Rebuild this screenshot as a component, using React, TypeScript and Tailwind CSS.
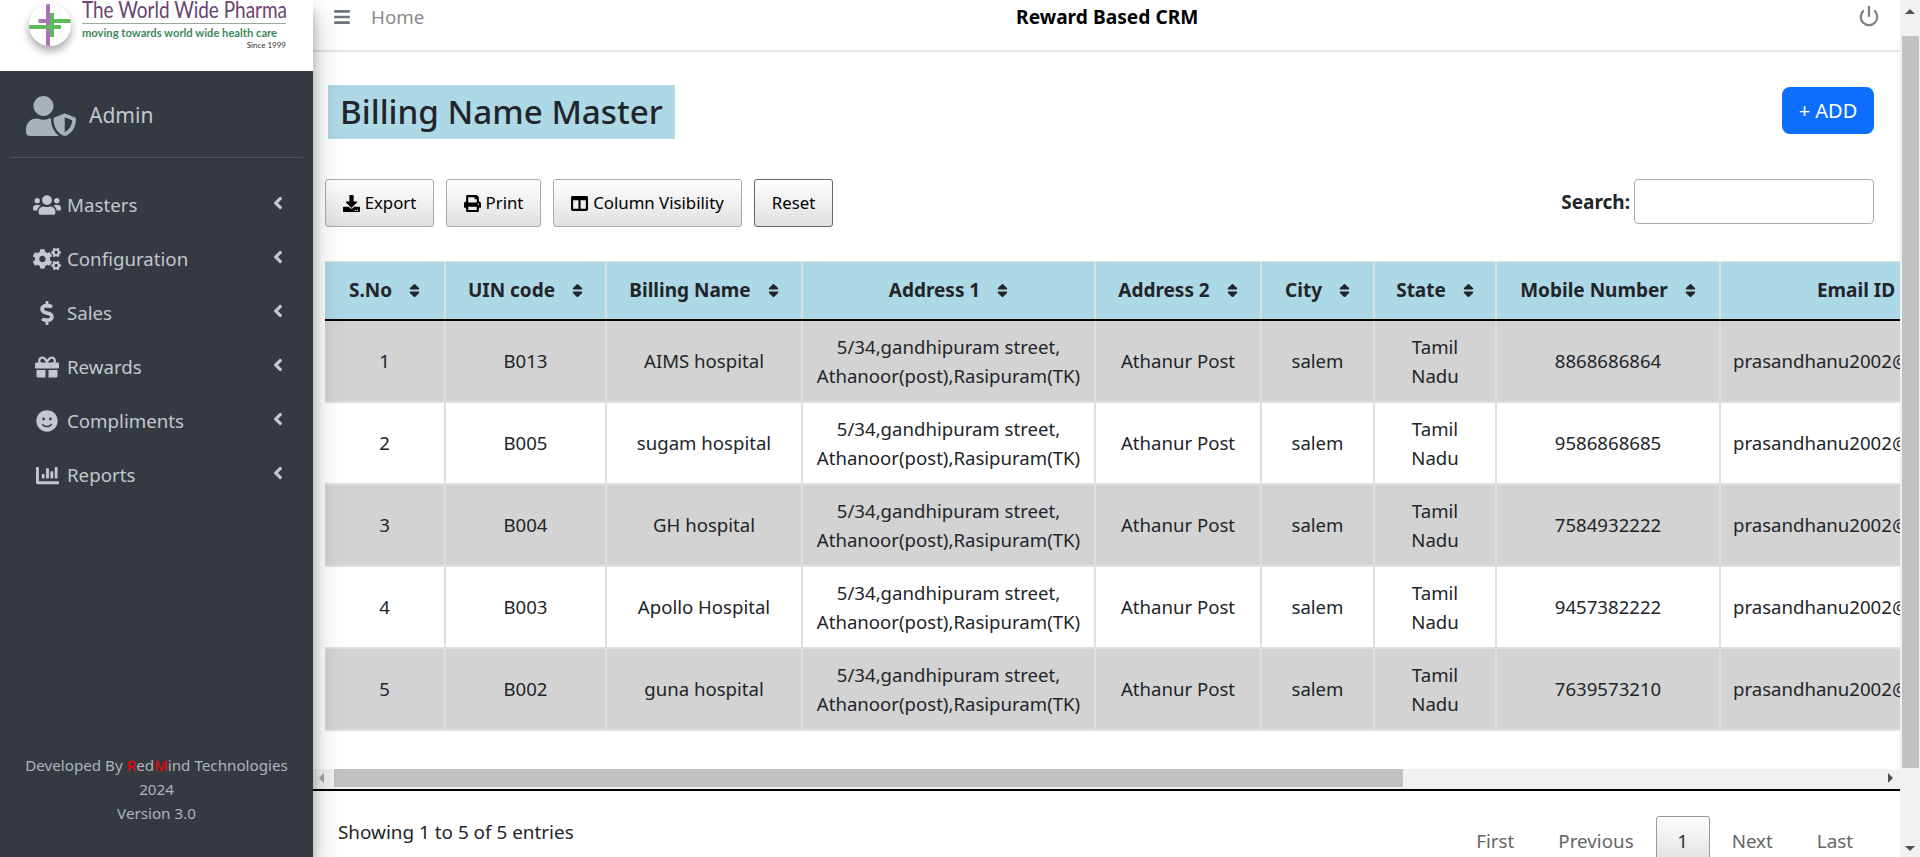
import React from 'react';
import { Power } from 'lucide-react';
import {
  FaAngleLeft,
  FaBars,
  FaChartBar,
  FaColumns,
  FaCogs,
  FaDollarSign,
  FaDownload,
  FaGift,
  FaPrint,
  FaSmile,
  FaSort,
  FaUsers,
  FaUserShield,
} from 'react-icons/fa';

const menu = [
  { label: 'Masters', icon: FaUsers, size: 'w-7 h-7' },
  { label: 'Configuration', icon: FaCogs, size: 'w-7 h-7' },
  { label: 'Sales', icon: FaDollarSign, size: 'w-6 h-6' },
  { label: 'Rewards', icon: FaGift, size: 'w-6 h-6' },
  { label: 'Compliments', icon: FaSmile, size: 'w-[22px] h-[22px]' },
  { label: 'Reports', icon: FaChartBar, size: 'w-[23px] h-[23px]' },
];

const columns = [
  { label: 'S.No', width: 'w-[120px]' },
  { label: 'UIN code', width: 'w-[161px]' },
  { label: 'Billing Name', width: 'w-[196px]' },
  { label: 'Address 1', width: 'w-[293px]' },
  { label: 'Address 2', width: 'w-[166px]' },
  { label: 'City', width: 'w-[113px]' },
  { label: 'State', width: 'w-[122px]' },
  { label: 'Mobile Number', width: 'w-[224px]' },
  { label: 'Email ID', width: 'w-[300px]' },
];

const rows = [
  { no: 1, uin: 'B013', name: 'AIMS hospital', mobile: '8868686864' },
  { no: 2, uin: 'B005', name: 'sugam hospital', mobile: '9586868685' },
  { no: 3, uin: 'B004', name: 'GH hospital', mobile: '7584932222' },
  { no: 4, uin: 'B003', name: 'Apollo Hospital', mobile: '9457382222' },
  { no: 5, uin: 'B002', name: 'guna hospital', mobile: '7639573210' },
];

const cell = 'border-r-2 border-[#e0e0e0] px-3 text-center font-normal';

function Logo() {
  return (
    <div className="flex h-[71px] shrink-0 overflow-hidden bg-white pl-[29px] pt-1">
      <svg viewBox="0 0 42 42" className="h-[42px] w-[42px] shrink-0 rounded-full shadow-[0_5px_9px_rgba(0,0,0,0.35)]">
        <circle cx="21" cy="21" r="21" fill="#fff" />
        <rect x="17" y="0" width="4" height="42" fill="#ab73b6" />
        <rect x="9.5" y="15" width="23" height="4" fill="#ab73b6" />
        <rect x="21" y="9" width="4" height="24" fill="#5cbc5c" />
        <rect x="0" y="21" width="32" height="4" fill="#5cbc5c" />
        <rect x="21" y="15" width="21" height="4" fill="#5cbc5c" />
      </svg>
      <div className="ml-[11px] w-[204px] font-['Lato',sans-serif]">
        <div className="-mt-[10px] origin-left scale-x-[0.79] whitespace-nowrap text-[24px] leading-[30px] text-[#6b4272]">The World Wide Pharma</div>
        <div className="mt-[-1px] h-px bg-[#9aa89a]" />
        <div className="mt-[2px] whitespace-nowrap text-[11.2px] font-bold leading-[14px] text-[#3c8a5c]">moving towards world wide health care</div>
        <div className="text-right text-[8px] leading-[10px] text-[#333]">Since 1999</div>
      </div>
    </div>
  );
}

function Sidebar() {
  return (
    <aside className="z-10 flex h-full w-[313px] shrink-0 flex-col bg-[#343a40] shadow-[0_14px_28px_rgba(0,0,0,0.25),0_10px_10px_rgba(0,0,0,0.22)]">
      <Logo />
      <div className="mx-[10px] flex h-[87px] items-center border-b border-[#4b545c] pl-4 pt-[3px]">
        <FaUserShield className="h-10 w-[50px] text-[#a8b2ba]" />
        <span className="ml-[13px] text-[21px] text-[#c2c7d0]">Admin</span>
      </div>
      <nav className="mt-[20px] flex flex-col">
        {menu.map((item) => (
          <div key={item.label} className="flex h-[54px] items-center pl-[33px] pr-[27px] text-[#c2c7d0]">
            <span className="flex w-[28px] justify-center">
              <item.icon className={item.size} />
            </span>
            <span className="ml-[6px] flex-1 text-[18.7px]">{item.label}</span>
            <FaAngleLeft className="-mt-[5px] h-5 w-4" />
          </div>
        ))}
      </nav>
      <div className="mt-auto mb-[32px] text-center text-[15.2px] leading-[24px] text-[#adb5bd]">
        <div>
          Developed By <span className="text-[#ff0000]">R</span>ed<span className="text-[#ff0000]">M</span>ind Technologies
        </div>
        <div>2024</div>
        <div>Version 3.0</div>
      </div>
    </aside>
  );
}

function ToolButton({ icon, label, dark, width }: { icon?: React.ReactNode; label: string; dark?: boolean; width: string }) {
  return (
    <button
      className={`flex h-[48px] items-center justify-center gap-[5px] rounded-[3px] border bg-gradient-to-b from-white to-[#e0e0e0] text-[16.8px] text-black ${width} ${dark ? 'border-[#666]' : 'border-[#aaa]'}`}
    >
      {icon}
      {label}
    </button>
  );
}

function BillingTable() {
  return (
    <div className="shrink-0 overflow-hidden pl-[12px]">
      <table className="w-[1695px] table-fixed border-collapse text-[18.6px] leading-[29px] text-[#212529]">
        <thead>
          <tr className="h-[58px] bg-[#add8e6]">
            {columns.map((col) => (
              <th key={col.label} className={`${col.width} border-r-2 border-t border-b-2 border-r-[#e0e0e0] border-t-[#e0e0e0] border-b-black px-3 text-center text-[19px] font-bold`}>
                <span className="inline-flex items-center gap-[17px]">
                  {col.label}
                  <FaSort className="h-[17px] w-[11px]" />
                </span>
              </th>
            ))}
          </tr>
        </thead>
        <tbody>
          {rows.map((row) => (
            <tr key={row.no} className={`h-[82px] border-b-2 border-[#e0e0e0] ${row.no % 2 === 1 ? 'bg-[#d3d3d3]' : 'bg-white'}`}>
              <td className={cell}>{row.no}</td>
              <td className={cell}>{row.uin}</td>
              <td className={cell}>{row.name}</td>
              <td className={cell}>
                5/34,gandhipuram street,
                <br />
                Athanoor(post),Rasipuram(TK)
              </td>
              <td className={cell}>Athanur Post</td>
              <td className={cell}>salem</td>
              <td className={cell}>
                Tamil
                <br />
                Nadu
              </td>
              <td className={cell}>{row.mobile}</td>
              <td className="whitespace-nowrap px-3 text-left">prasandhanu2002@gmail.com</td>
            </tr>
          ))}
        </tbody>
      </table>
    </div>
  );
}

export default function App() {
  return (
    <div className="flex h-[857px] w-[1920px] overflow-hidden bg-white font-['Noto_Sans',sans-serif]">
      <Sidebar />
      <main className="flex w-[1587px] shrink-0 flex-col">
        {/* Navbar */}
        <header className="relative flex h-[52px] shrink-0 items-start border-b-2 border-[#e4e4e4] pl-[20px] pr-[20px] pt-[7px]">
          <FaBars className="mt-[1px] h-[18px] w-[18px] text-[#6c757d]" />
          <span className="ml-[20px] text-[18.8px] leading-[20px] text-[#8a8a8a]">Home</span>
          <span className="flex-1 pr-[68px] text-center text-[19.2px] font-bold leading-[20px] text-black">Reward Based CRM</span>
          <Power className="-mt-[2px] h-[22px] w-[22px] text-[#808080]" strokeWidth={2.5} />
        </header>

        {/* Title row */}
        <div className="flex h-[127px] shrink-0 items-start justify-between pl-[15px] pr-[26px] pt-[33px]">
          <h1 className="flex h-[54px] items-center bg-[#add8e6] px-3 text-[33.2px] font-medium text-[#212529]">Billing Name Master</h1>
          <button className="mt-[2px] h-[47px] w-[92px] rounded-lg bg-[#0d6efd] text-[20px] text-white">+ ADD</button>
        </div>

        {/* Toolbar */}
        <div className="flex h-[82px] shrink-0 items-start justify-between pl-[12px] pr-[26px]">
          <div className="flex gap-[12px]">
            <ToolButton width="w-[109px]" icon={<FaDownload className="h-[17px] w-[17px]" />} label="Export" />
            <ToolButton width="w-[95px]" icon={<FaPrint className="h-[17px] w-[17px]" />} label="Print" />
            <ToolButton width="w-[189px]" icon={<FaColumns className="h-[17px] w-[17px]" />} label="Column Visibility" />
            <ToolButton width="w-[79px]" label="Reset" dark />
          </div>
          <label className="flex items-center gap-[4px] text-[19px] font-bold text-[#212529]">
            <span className="mt-[2px]">Search:</span>
            <input className="h-[45px] w-[240px] rounded-[4px] border border-[#aaa] bg-white" />
          </label>
        </div>

        <BillingTable />

        {/* Horizontal scrollbar */}
        <div className="mt-[38px] flex h-[22px] shrink-0 items-center border-b-2 border-black bg-[#f1f1f1] pb-[1px]">
          <span className="ml-[6px] h-0 w-0 border-y-[5px] border-r-[5px] border-y-transparent border-r-[#a3a3a3]" />
          <span className="ml-[10px] h-[18px] w-[1069px] bg-[#c1c1c1]" />
          <span className="ml-auto mr-[7px] h-0 w-0 border-y-[5px] border-l-[5px] border-y-transparent border-l-[#505050]" />
        </div>

        {/* Footer of the table */}
        <div className="flex min-h-0 flex-1 items-start justify-between overflow-hidden pl-[25px] pr-[25px]">
          <span className="mt-[27px] text-[18.9px] text-[#212529]">Showing 1 to 5 of 5 entries</span>
          <div className="mt-[25px] flex items-center text-[18.8px] text-[#666]">
            <span className="px-[22px]">First</span>
            <span className="px-[22px]">Previous</span>
            <span className="flex h-[52px] w-[54px] items-center justify-center rounded-t-[3px] border border-[#999] bg-gradient-to-b from-white to-[#dcdcdc] text-[#333]">1</span>
            <span className="px-[22px]">Next</span>
            <span className="px-[22px]">Last</span>
          </div>
        </div>
      </main>

      {/* Page scrollbar */}
      <div className="flex w-[20px] shrink-0 flex-col items-center bg-[#f1f1f1]">
        <span className="mt-[9px] h-0 w-0 border-x-[5px] border-b-[5px] border-x-transparent border-b-[#505050]" />
        <span className="mt-[22px] h-[732px] w-[17px] bg-[#c1c1c1]" />
        <span className="mt-auto mb-[6px] h-0 w-0 border-x-[5px] border-t-[5px] border-x-transparent border-t-[#505050]" />
      </div>
    </div>
  );
}
